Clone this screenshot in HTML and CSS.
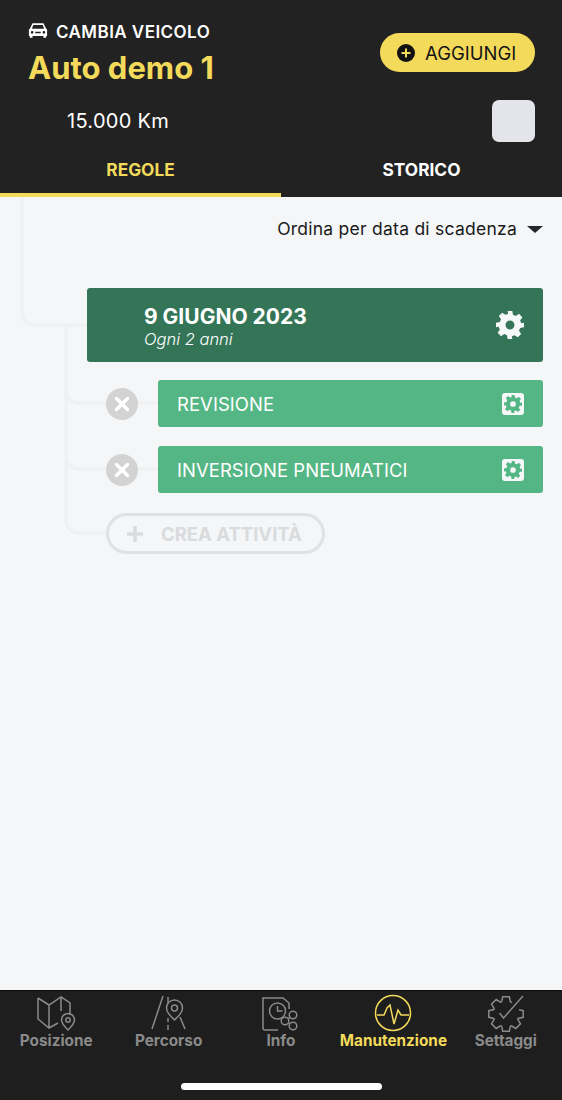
FILE: index.html
```html
<!DOCTYPE html>
<html lang="it">
<head>
<meta charset="utf-8">
<title>Manutenzione</title>
<link rel="stylesheet" href="styles.css">
</head>
<body>
<div class="app">
  <header class="header">
    <div class="top">
      <div class="vehicle">
        <div class="change">
          <svg class="car" viewBox="0 0 22 18"><path fill="#fff" d="M5 1h12l3 6 1 1v7h-1v2h-3v-2H5v2H2v-2H1V8l1-1zM5.800 3 4.300 7h13.400l-1.500-4zM4.500 9.500a1.500 1.500 0 1 0 0 3 1.500 1.500 0 0 0 0-3zm13 0a1.500 1.500 0 1 0 0 3 1.500 1.500 0 0 0 0-3zM8 10.500v1.500h6v-1.500z" fill-rule="evenodd"/></svg>
          <span>CAMBIA VEICOLO</span>
        </div>
        <div class="name">Auto demo 1</div>
      </div>
      <button class="add">
        <svg class="add-icon" viewBox="0 0 18 18"><circle cx="9" cy="9" r="9" fill="#111"/><path d="M9 4.500v9M4.500 9h9" stroke="#f3da5b" stroke-width="2"/></svg>
        <span>AGGIUNGI</span>
      </button>
    </div>
    <div class="odo">
      <span class="km">15.000 Km</span>
      <div class="swatch"></div>
    </div>
    <nav class="tabs">
      <div class="tab tab-active">REGOLE</div>
      <div class="tab">STORICO</div>
    </nav>
  </header>

  <main class="main">
    <svg class="tree" width="330" height="360" viewBox="0 0 330 360" fill="none">
      <path d="M22 0V114Q22 128 36 128H87M66 128V192Q66 206 80 206H158M66 192V258Q66 272 80 272H158M66 258V322Q66 336 80 336H107"/>
    </svg>
    <div class="sort">
      <span>Ordina per data di scadenza</span>
      <span class="caret"></span>
    </div>
    <section class="rule">
      <div class="rule-text">
        <div class="date">9 GIUGNO 2023</div>
        <div class="every">Ogni 2 anni</div>
      </div>
      <svg class="gear" viewBox="0 0 24 24"><use href="#gear"/></svg>
    </section>
    <div class="tasks">
      <div class="task-row">
        <span class="remove"><svg viewBox="0 0 16 16"><path d="M2.500 2.500l11 11M13.500 2.500l-11 11"/></svg></span>
        <div class="task">
          <span>REVISIONE</span>
          <span class="task-gear"><svg viewBox="0 0 24 24"><use href="#gear"/></svg></span>
        </div>
      </div>
      <div class="task-row">
        <span class="remove"><svg viewBox="0 0 16 16"><path d="M2.500 2.500l11 11M13.500 2.500l-11 11"/></svg></span>
        <div class="task">
          <span>INVERSIONE PNEUMATICI</span>
          <span class="task-gear"><svg viewBox="0 0 24 24"><use href="#gear"/></svg></span>
        </div>
      </div>
      <div class="create">
        <svg viewBox="0 0 16 16"><path d="M8 0v16M0 8h16"/></svg>
        <span>CREA ATTIVITÀ</span>
      </div>
    </div>
  </main>

  <footer class="bottom">
    <nav class="nav">
      <div class="nav-item">
        <svg class="nav-icon" viewBox="0 0 40 36" fill="none"><path d="M2 2l11 7 12-8 9 6v12M2 2v21l11 9 9-5M13 9v23M25 1v14"/><path d="M32 34c-4-4-6.500-7-6.500-10a6.500 6.500 0 0 1 13 0c0 3-2.500 6-6.500 10z"/><circle cx="32" cy="24" r="2.200"/></svg>
        <span>Posizione</span>
      </div>
      <div class="nav-item">
        <svg class="nav-icon" viewBox="0 0 40 36" fill="none"><path d="M14 0L3 33M19 1v6M19 22v4M19 29v5M31 21l5 12"/><path d="M25.500 24c-5-5-8-8-8-12a8 8 0 0 1 16 0c0 4-3 7-8 12z"/><circle cx="25.500" cy="12" r="3"/></svg>
        <span>Percorso</span>
      </div>
      <div class="nav-item">
        <svg class="nav-icon" viewBox="0 0 40 36" fill="none"><path d="M17 34H4a2 2 0 0 1-2-2V2h20l6 5v6"/><circle cx="16.500" cy="15" r="8"/><path d="M16.500 10v5h5"/><circle cx="32" cy="19" r="3.800"/><circle cx="24" cy="25" r="3.800"/><circle cx="32" cy="30" r="3.800"/><path d="M27 23l2-2M27.500 27l1.500 1"/></svg>
        <span>Info</span>
      </div>
      <div class="nav-item nav-active">
        <svg class="nav-icon" viewBox="0 0 40 36" fill="none"><circle cx="20" cy="17" r="17.500"/><path d="M4 19h7l3-7 3-3 4 19 4-14 3 5h8"/></svg>
        <span>Manutenzione</span>
      </div>
      <div class="nav-item">
        <svg class="nav-icon" viewBox="0 0 40 36" fill="none"><path d="M26 6.600L24.400 5.800 23.300.8H16.700L15.600 5.800 14.500 6.200 10.200 3.500 5.500 8.200 8.200 12.500 7.800 13.600 2.800 14.700V21.300L7.800 22.400 8.200 23.500 5.500 27.800 10.200 32.500 14.500 29.800 15.600 30.200 16.700 35.200H23.300L24.400 30.200 25.500 29.800 29.800 32.500 34.500 27.800 31.800 23.500 32.200 22.400 37.200 21.300V14.700L33 13.800"/><path d="M13.500 17l4 5L37 0"/></svg>
        <span>Settaggi</span>
      </div>
    </nav>
    <div class="home-bar"></div>
  </footer>
</div>
<svg class="defs" width="0" height="0">
  <defs>
    <g id="gear"><path fill-rule="evenodd" d="M10 0h4l.6 3.300 2.300 1 2.800-1.900 2.900 2.900-1.900 2.800 1 2.300L24 10v4l-3.300.6-1 2.300 1.900 2.800-2.900 2.900-2.800-1.900-2.300 1L14 24h-4l-.6-3.300-2.300-1-2.800 1.900-2.900-2.900 1.900-2.800-1-2.300L0 14v-4l3.300-.6 1-2.300-1.900-2.800 2.900-2.900 2.800 1.900 2.300-1zM12 8.200a3.800 3.800 0 1 0 0 7.600 3.800 3.800 0 0 0 0-7.600z"/></g>
  </defs>
</svg>
</body>
</html>
```
FILE: styles.css
```css
* { box-sizing: border-box; }
html, body { margin: 0; padding: 0; }
body { font-family: "Inter", "Liberation Sans", sans-serif; background: #f4f6f8; }
.app { width: 562px; height: 1100px; display: flex; flex-direction: column; overflow: hidden; }
.defs { position: absolute; }

.header { height: 197px; background: #222222; color: #fff; flex: none; display: flex; flex-direction: column; }
.top { display: flex; justify-content: space-between; padding: 21px 27px 0 28px; height: 100px; }
.change { display: flex; align-items: center; gap: 8px; font-size: 17px; font-weight: 600; height: 22px; letter-spacing: 0.45px; white-space: nowrap; }
.car { width: 20px; height: 17px; margin-top: -4px; }
.name { color: #f3da5b; font-size: 31px; font-weight: 700; line-height: 36px; margin-top: 7px; letter-spacing: 0; white-space: nowrap; }
.add { width: 155px; height: 39px; margin-top: 12px; border: 0; border-radius: 20px; background: #f3da5b; display: flex; align-items: center; padding: 0 0 0 17px; gap: 10px; font: 400 18.500px "Inter", "Liberation Sans", sans-serif; color: #141414; }
.add-icon { width: 18px; height: 18px; flex: none; }

.odo { display: flex; justify-content: space-between; align-items: center; height: 42px; padding: 0 27px 0 67px; }
.km { font-size: 20px; font-weight: 400; letter-spacing: 0.3px; }
.swatch { width: 43px; height: 42px; border-radius: 7px; background: #e4e5ea; }

.tabs { display: flex; flex: 1; }
.tab { flex: 1; display: flex; align-items: center; justify-content: center; font-size: 17.300px; font-weight: 700; height: 55px; border-bottom: 4px solid transparent; padding-top: 3px; }
.tab-active { color: #f3da5b; border-bottom-color: #f3da5b; }

.main { flex: 1; position: relative; padding-top: 20px; }
.tree { position: absolute; left: 0; top: 0; }
.tree path { stroke: #eef0f1; stroke-width: 3; }
.sort { position: relative; display: flex; justify-content: flex-end; align-items: center; gap: 10px; padding-right: 19px; font-size: 17.500px; color: #1a1a1a; height: 22px; letter-spacing: 0.25px; }
.caret { width: 0; height: 0; border-left: 8px solid transparent; border-right: 8px solid transparent; border-top: 7px solid #23272e; margin-top: 2px; }

.rule { position: relative; margin: 49px 19px 0 87px; height: 74px; background: #347558; border-radius: 3px; color: #fff; display: flex; justify-content: space-between; align-items: center; padding: 0 19px 0 57px; }
.rule-text { padding-top: 4px; }
.date { font-size: 21px; font-weight: 700; line-height: 24px; letter-spacing: 0; white-space: nowrap; }
.every { font-size: 16.500px; font-style: italic; line-height: 21px; font-weight: 300; }
.gear { width: 28px; height: 28px; fill: #f6f7f8; }

.tasks { position: relative; margin: 18px 19px 0 106px; display: flex; flex-direction: column; gap: 19px; }
.task-row { display: flex; align-items: center; gap: 20px; }
.remove { width: 32px; height: 32px; border-radius: 50%; background: #d3d3d3; display: flex; align-items: center; justify-content: center; flex: none; }
.remove svg { width: 16px; height: 16px; fill: none; stroke: #fff; stroke-width: 3.500; stroke-linecap: round; }
.task { flex: 1; height: 47px; background: #55b685; border-radius: 3px; color: #fff; display: flex; justify-content: space-between; align-items: center; padding: 0 19px; font-size: 18.400px; font-weight: 400; letter-spacing: 0.1px; }
.task-gear { width: 22px; height: 22px; background: #f6f7f8; border-radius: 3px; display: flex; align-items: center; justify-content: center; }
.task-gear svg { width: 18px; height: 18px; fill: #55b685; }
.create { width: 219px; height: 41px; margin-top: 1px; border: 3px solid #dfe1e2; border-radius: 21px; display: flex; align-items: center; padding-left: 18px; gap: 18px; color: #d9dbdc; font-size: 18.500px; font-weight: 700; background: #f4f6f8; white-space: nowrap; }
.create svg { width: 16px; height: 16px; fill: none; stroke: #d9dbdc; stroke-width: 3.500; flex: none; }

.bottom { height: 110px; flex: none; background: #1e1e1e; border-top: 1px solid #0c0c0c; display: flex; flex-direction: column; }
.nav { display: flex; padding-top: 5px; height: 92px; }
.nav-item { flex: 1; display: flex; flex-direction: column; align-items: center; color: #8a8a8a; font-size: 15.300px; font-weight: 700; }
.nav-icon { width: 40px; height: 36px; stroke: #8a8a8a; stroke-width: 1.500; overflow: visible; }
.nav-item span { line-height: 18px; white-space: nowrap; }
.nav-active { color: #f3da5b; }
.nav-active .nav-icon { stroke: #f3da5b; }
.home-bar { width: 201px; height: 7px; border-radius: 4px; background: #fff; margin: 0 auto; }
```
